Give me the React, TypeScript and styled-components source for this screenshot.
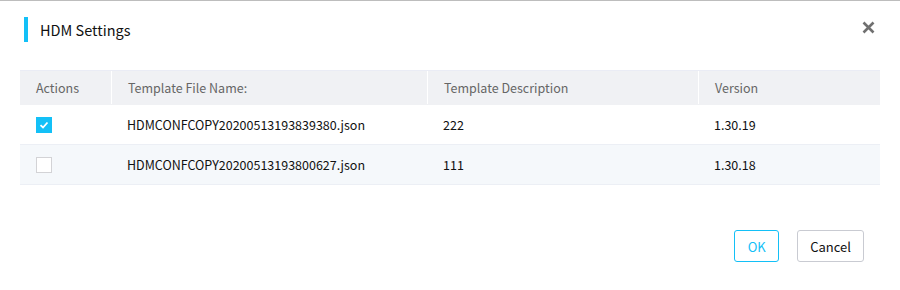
import React from "react";
import styled, { createGlobalStyle } from "styled-components";

const Global = createGlobalStyle`
  html, body { margin: 0; padding: 0; background: #fff; }
  body { font-family: "Noto Sans CJK SC", "Noto Sans", sans-serif; }
  * { box-sizing: border-box; }
`;

const Dialog = styled.div`
  width: 900px;
  height: 290px;
  border-top: 1px solid #bdbdbd;
  background: #fff;
  padding: 0 20px;
  display: flex;
  flex-direction: column;
`;

const Header = styled.div`
  display: flex;
  align-items: center;
  justify-content: space-between;
  height: 61px;
  padding-bottom: 4px;
`;

const Title = styled.h1`
  margin: 0;
  display: flex;
  align-items: center;
  gap: 12px;
  font-size: 14.5px;
  font-weight: 400;
  color: #111;
  padding-left: 4px;
  &::before {
    content: "";
    width: 4px;
    height: 25px;
    background: #13c0f7;
    display: block;
  }
`;

const Close = styled.button`
  border: none;
  background: none;
  padding: 0;
  margin-right: 5px;
  margin-top: -4px;
  width: 13px;
  height: 13px;
  display: flex;
  align-items: center;
  justify-content: center;
  cursor: pointer;
`;

const Table = styled.div`
  margin-top: 8px;
  display: flex;
  flex-direction: column;
`;

const Row = styled.div<{ $head?: boolean; $alt?: boolean }>`
  display: grid;
  grid-template-columns: 91px 316px 271px 182px;
  height: ${(p) => (p.$head ? "35px" : "40px")};
  background: ${(p) => (p.$head ? "#f0f1f4" : p.$alt ? "#f5f8fb" : "#fff")};
  border-bottom: 1px solid ${(p) => (p.$head ? "#f0f1f4" : "#eceff5")};
  ${(p) => (p.$head ? "border-top: 1px solid #eaecf5;" : "")}
`;

const Cell = styled.div<{ $head?: boolean; $sep?: boolean }>`
  display: flex;
  align-items: center;
  padding-left: 16px;
  font-size: 12.5px;
  color: ${(p) => (p.$head ? "#666" : "#111")};
  ${(p) => (p.$sep ? "border-left: 1px solid #fff;" : "")}
  ${(p) => (p.$head ? "padding-bottom: 1px;" : "")}
`;

const Box = styled.span<{ $checked?: boolean }>`
  width: 16px;
  height: 16px;
  display: flex;
  align-items: center;
  justify-content: center;
  background: ${(p) => (p.$checked ? "#13c0f7" : "#fff")};
  border: 1px solid ${(p) => (p.$checked ? "#13c0f7" : "#d3d3d6")};
`;

const Footer = styled.div`
  margin-top: 45px;
  display: flex;
  justify-content: flex-end;
  gap: 18px;
  padding-right: 16px;
`;

const Button = styled.button<{ $primary?: boolean }>`
  height: 32px;
  padding: 0 12px;
  min-width: 45px;
  border-radius: 3px;
  background: #fff;
  font-family: inherit;
  font-size: 13px;
  border: 1px solid ${(p) => (p.$primary ? "#13c0f7" : "#c9cbd2")};
  color: ${(p) => (p.$primary ? "#13c0f7" : "#111")};
  cursor: pointer;
`;

const rows = [
  { checked: true, name: "HDMCONFCOPY20200513193839380.json", desc: "222", ver: "1.30.19" },
  { checked: false, name: "HDMCONFCOPY20200513193800627.json", desc: "111", ver: "1.30.18" },
];

export default function App() {
  return (
    <>
      <Global />
      <Dialog>
        <Header>
          <Title>HDM Settings</Title>
          <Close aria-label="close">
            <svg width="13" height="13" viewBox="0 0 13 13">
              <path d="M1.5 1.5 L11.5 11.5 M11.5 1.5 L1.5 11.5" stroke="#707070" strokeWidth="2.6" strokeLinecap="butt" />
            </svg>
          </Close>
        </Header>
        <Table>
          <Row $head>
            <Cell $head>Actions</Cell>
            <Cell $head $sep>Template File Name:</Cell>
            <Cell $head $sep>Template Description</Cell>
            <Cell $head $sep>Version</Cell>
          </Row>
          {rows.map((r, i) => (
            <Row key={r.name} $alt={i % 2 === 1}>
              <Cell>
                <Box $checked={r.checked}>
                  {r.checked && (
                    <svg width="10" height="8" viewBox="0 0 10 8">
                      <path d="M1.5 4.2 L4 6.5 L8.5 1.5" stroke="#fff" strokeWidth="1.8" fill="none" />
                    </svg>
                  )}
                </Box>
              </Cell>
              <Cell>{r.name}</Cell>
              <Cell>{r.desc}</Cell>
              <Cell>{r.ver}</Cell>
            </Row>
          ))}
        </Table>
        <Footer>
          <Button $primary>OK</Button>
          <Button>Cancel</Button>
        </Footer>
      </Dialog>
    </>
  );
}
